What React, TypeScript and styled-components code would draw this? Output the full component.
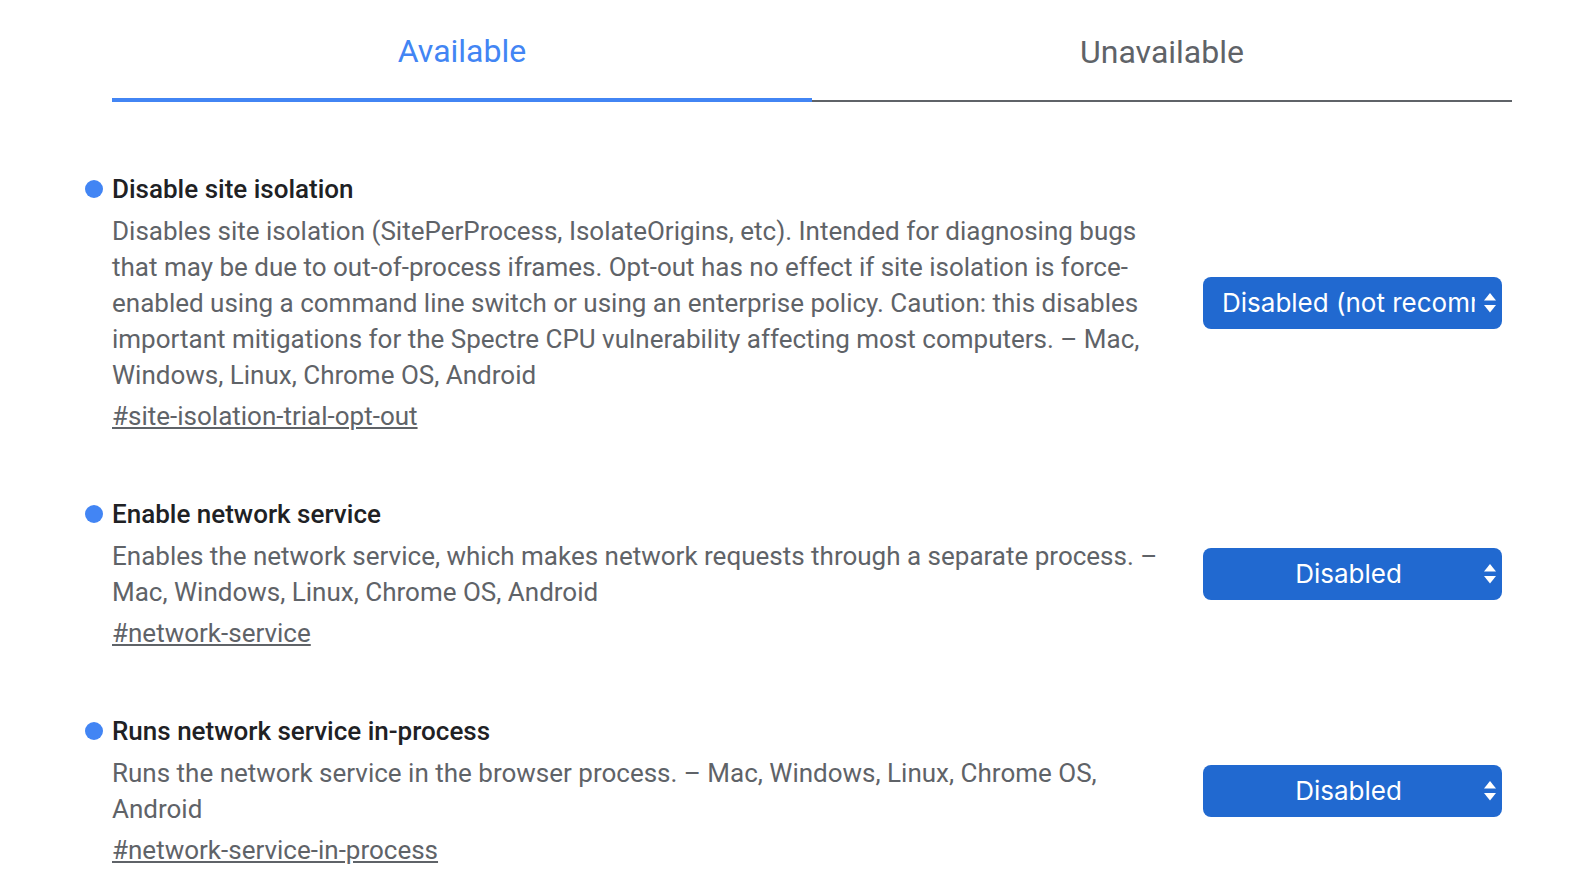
import React from 'react';
import styled, { createGlobalStyle } from 'styled-components';

const GlobalStyle = createGlobalStyle`
  html, body {
    margin: 0;
    padding: 0;
    background: #fff;
  }
  body {
    font-family: Roboto, "Noto Sans", "Liberation Sans", sans-serif;
  }
`;

const Page = styled.div`
  padding: 0 60px 0 112px;
`;

const Tabs = styled.div`
  display: flex;
`;

const Tab = styled.div<{ $active?: boolean }>`
  flex: 1;
  height: 102px;
  box-sizing: border-box;
  padding-top: 4px;
  display: flex;
  align-items: center;
  justify-content: center;
  font-size: 32px;
  color: ${(p) => (p.$active ? '#4285f4' : '#5f6368')};
  border-bottom: ${(p) => (p.$active ? '4px solid #4285f4' : '2px solid #5f6368')};
`;

const List = styled.div`
  display: flex;
  flex-direction: column;
  gap: 62px;
  padding-top: 69px;
`;

const Row = styled.div`
  display: flex;
  align-items: center;
`;

const Info = styled.div`
  width: 1058px;
  flex: none;
`;

const Title = styled.div`
  display: flex;
  align-items: center;
  gap: 9px;
  margin-left: -27px;
  font-size: 26px;
  line-height: 36px;
  font-weight: 500;
  color: #202124;
`;

const Dot = styled.span`
  width: 18px;
  height: 18px;
  border-radius: 50%;
  background: #4285f4;
  flex: none;
`;

const Description = styled.p`
  margin: 6px 0 0;
  font-size: 26px;
  line-height: 36px;
  color: #5f6368;
`;

const Permalink = styled.a`
  display: inline-block;
  margin-top: 5px;
  font-size: 26px;
  line-height: 36px;
  color: #5f6368;
  text-decoration: underline;
`;

const Control = styled.div`
  flex: 1;
  display: flex;
  justify-content: flex-end;
  padding-right: 10px;
`;

const SelectBox = styled.div`
  width: 299px;
  height: 52px;
  box-sizing: border-box;
  display: flex;
  align-items: center;
  gap: 9px;
  padding: 0 6px 0 19px;
  border-radius: 8px;
  background: #2169d0;
  color: #fff;
  font-family: Inter, "Liberation Sans", sans-serif;
  font-size: 26px;
`;

const Value = styled.span<{ $centered?: boolean }>`
  flex: 1;
  overflow: hidden;
  white-space: nowrap;
  text-align: ${(p) => (p.$centered ? 'center' : 'left')};
`;

const Arrows = () => (
  <svg width="12" height="20" viewBox="0 0 12 20" fill="#fff">
    <polygon points="6,0 12,7.5 0,7.5" />
    <polygon points="0,12 12,12 6,19.5" />
  </svg>
);

type Flag = {
  name: string;
  description: string;
  id: string;
  value: string;
  centered: boolean;
};

const flags: Flag[] = [
  {
    name: 'Disable site isolation',
    description:
      'Disables site isolation (SitePerProcess, IsolateOrigins, etc). Intended for diagnosing bugs that may be due to out-of-process iframes. Opt-out has no effect if site isolation is force-enabled using a command line switch or using an enterprise policy. Caution: this disables important mitigations for the Spectre CPU vulnerability affecting most computers. – Mac, Windows, Linux, Chrome OS, Android',
    id: 'site-isolation-trial-opt-out',
    value: 'Disabled (not recommended)',
    centered: false,
  },
  {
    name: 'Enable network service',
    description:
      'Enables the network service, which makes network requests through a separate process. – Mac, Windows, Linux, Chrome OS, Android',
    id: 'network-service',
    value: 'Disabled',
    centered: true,
  },
  {
    name: 'Runs network service in-process',
    description:
      'Runs the network service in the browser process. – Mac, Windows, Linux, Chrome OS, Android',
    id: 'network-service-in-process',
    value: 'Disabled',
    centered: true,
  },
];

export default function App() {
  return (
    <Page>
      <GlobalStyle />
      <Tabs>
        <Tab $active>Available</Tab>
        <Tab>Unavailable</Tab>
      </Tabs>
      <List>
        {flags.map((flag) => (
          <Row key={flag.id}>
            <Info>
              <Title>
                <Dot />
                {flag.name}
              </Title>
              <Description>{flag.description}</Description>
              <Permalink href={`#${flag.id}`}>#{flag.id}</Permalink>
            </Info>
            <Control>
              <SelectBox>
                <Value $centered={flag.centered}>{flag.value}</Value>
                <Arrows />
              </SelectBox>
            </Control>
          </Row>
        ))}
      </List>
    </Page>
  );
}
